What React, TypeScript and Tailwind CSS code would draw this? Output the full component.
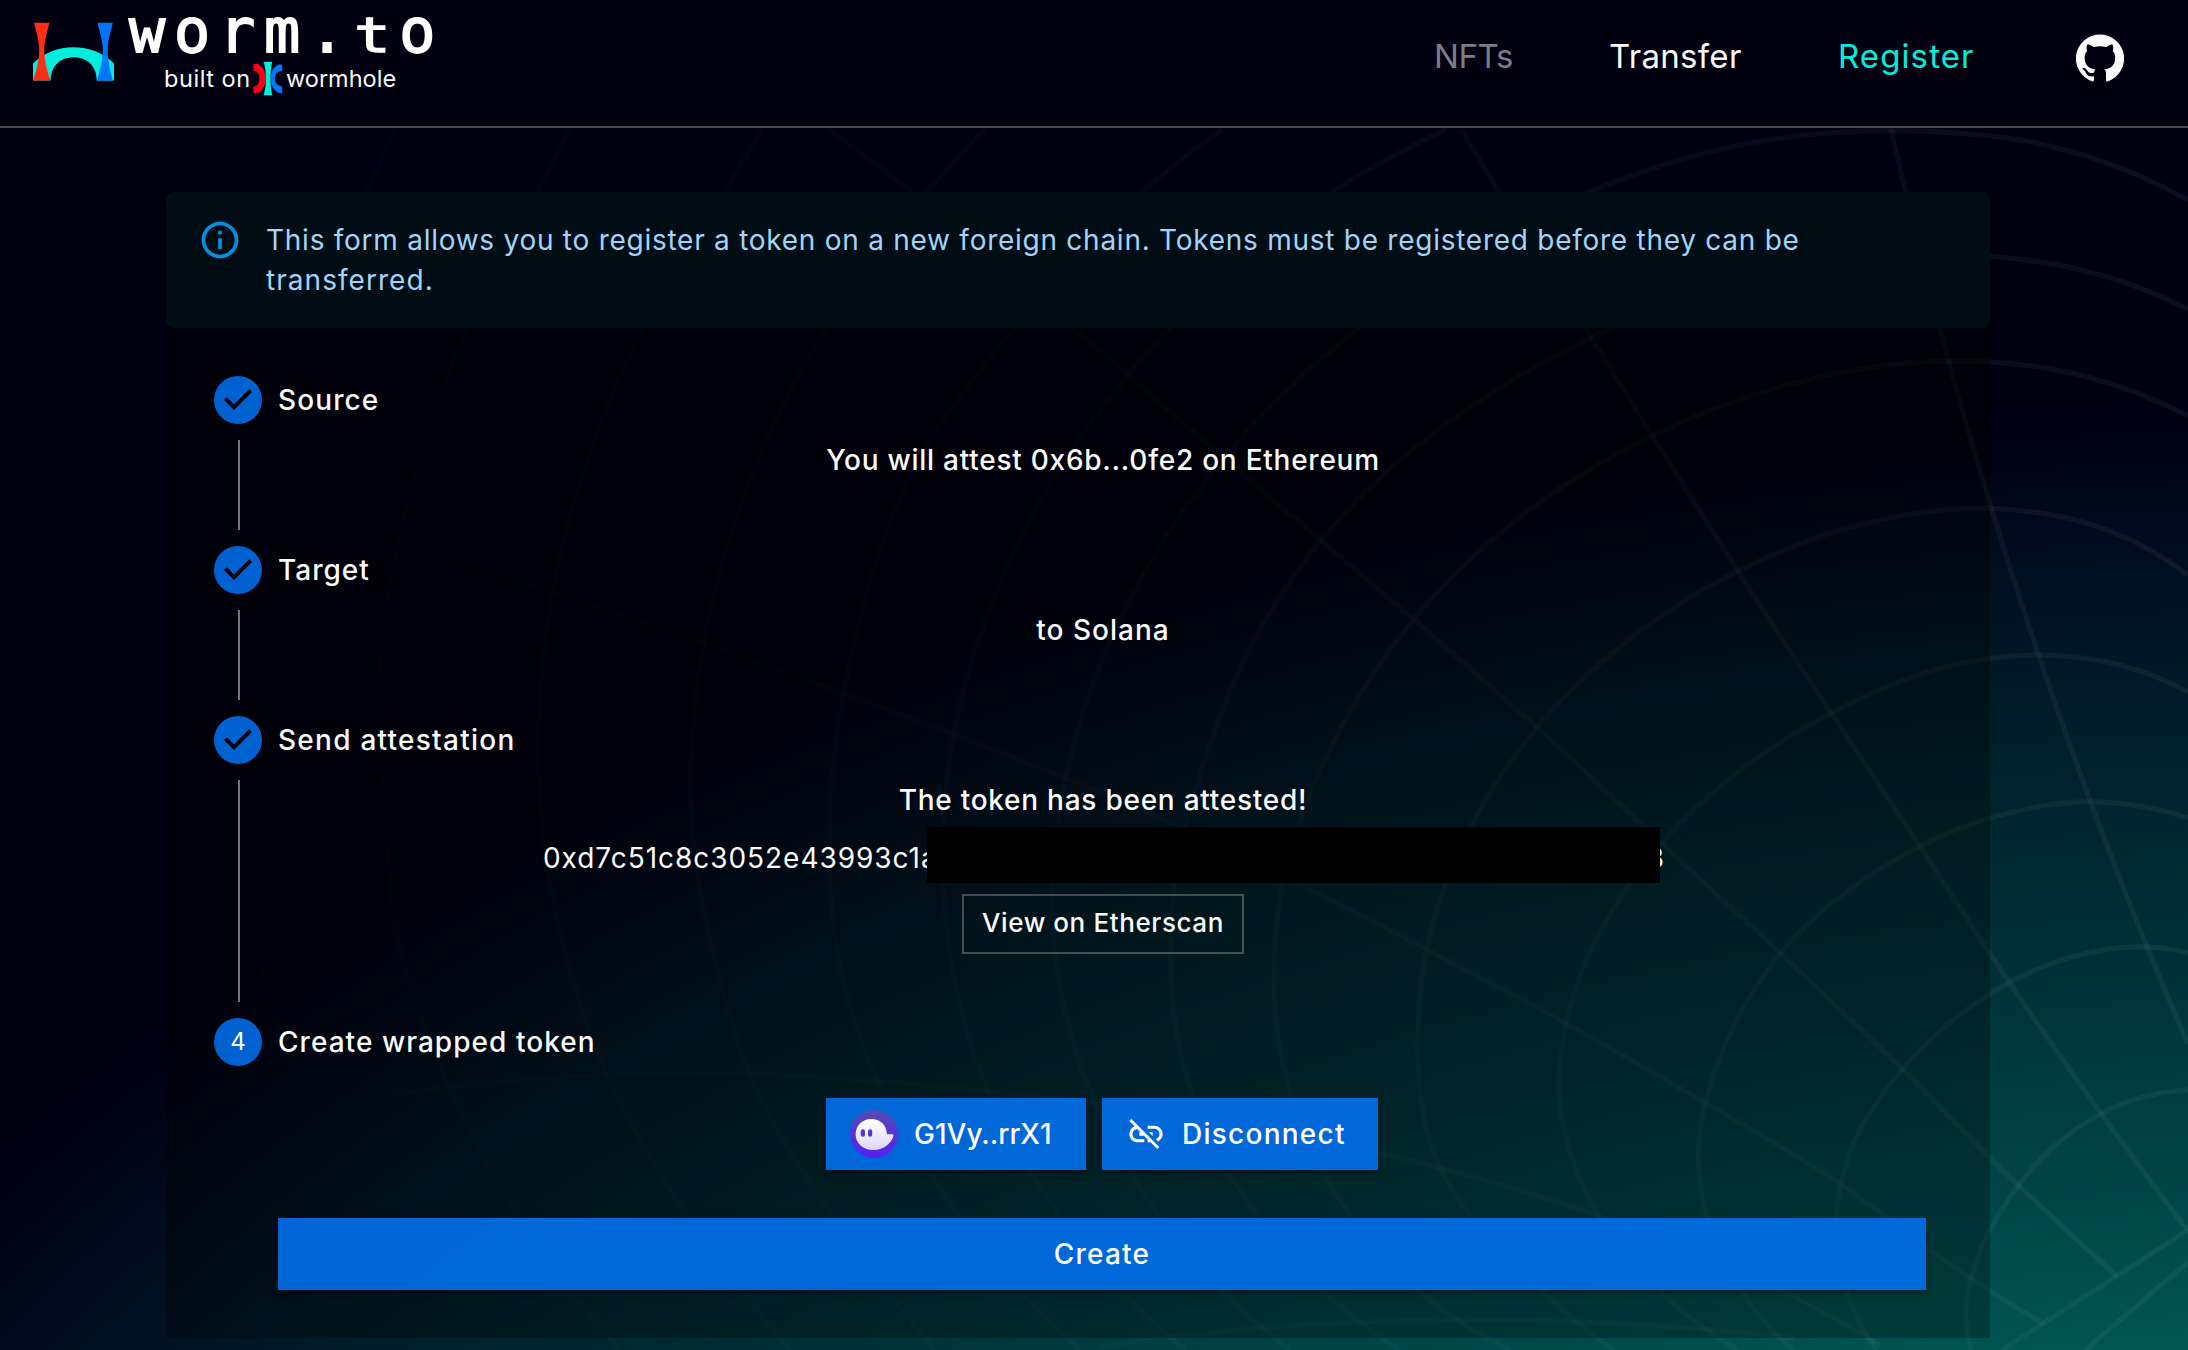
import React from "react";

type Point = [number, number];

// Rings of the tunnel grid, from the outermost to the innermost.
const RINGS: Point[][] = [
  [[395, 129], [372, 180], [303, 330], [252, 513], [229, 680], [233, 813], [249, 913], [294, 1073]],
  [[570, 129], [543, 180], [466, 330], [405, 513], [379, 680], [385, 813], [401, 953], [443, 1073], [540, 1250], [620, 1350]],
  [[762, 129], [725, 192], [642, 330], [573, 507], [541, 680], [541, 813], [570, 970], [606, 1073], [660, 1173], [790, 1350]],
  [[985, 129], [933, 185], [826, 328], [740, 507], [698, 680], [691, 813], [718, 973], [749, 1073], [833, 1217], [935, 1350]],
  [[1223, 129], [1142, 192], [1014, 328], [912, 473], [852, 653], [830, 813], [843, 980], [874, 1073], [960, 1217], [1080, 1350]],
  [[1447, 129], [1332, 192], [1169, 329], [1020, 540], [953, 740], [943, 870], [976, 1060], [1060, 1217], [1185, 1350]],
  [[2188, 200], [2050, 146], [1912, 131], [1750, 143], [1589, 192], [1357, 329], [1225, 457], [1135, 590], [1070, 760], [1053, 930], [1082, 1070], [1160, 1217], [1290, 1350]],
  [[2188, 309], [2090, 272], [1990, 256], [1880, 253], [1750, 273], [1610, 329], [1470, 407], [1357, 500], [1267, 617], [1208, 750], [1172, 910], [1182, 1060], [1258, 1217], [1400, 1350]],
  [[2188, 416], [2080, 375], [1950, 361], [1794, 383], [1648, 438], [1516, 520], [1405, 630], [1325, 760], [1280, 900], [1282, 1060], [1351, 1217], [1510, 1350]],
  [[2188, 575], [2110, 531], [2002, 509], [1863, 524], [1738, 571], [1610, 655], [1523, 745], [1455, 860], [1419, 1007], [1440, 1168], [1520, 1270], [1614, 1350]],
  [[2188, 692], [2120, 665], [2044, 655], [1945, 667], [1835, 711], [1710, 795], [1624, 892], [1572, 1000], [1559, 1090], [1579, 1177], [1654, 1285], [1738, 1350]],
  [[2188, 818], [2099, 802], [1990, 818], [1880, 869], [1780, 954], [1719, 1060], [1698, 1160], [1715, 1240], [1794, 1350]],
  [[2188, 953], [2148, 947], [2072, 957], [1985, 997], [1900, 1072], [1849, 1155], [1836, 1240], [1877, 1350]],
  [[2188, 1090], [2127, 1102], [2064, 1138], [2008, 1200], [1975, 1265], [1966, 1310], [1971, 1350]],
];

// Lines that run along the tunnel, towards its far end.
const SPOKES: Point[][] = [
  [[1891, 129], [1940, 329], [1990, 504], [2068, 740], [2141, 932], [2188, 1044]],
  [[1461, 129], [1499, 192], [1586, 329], [1652, 435], [1738, 571], [1849, 740], [1919, 845], [2009, 982], [2188, 1231]],
  [[828, 129], [912, 192], [1073, 328], [1225, 459], [1412, 618], [1551, 740], [1672, 853], [1780, 953], [1898, 1065], [2016, 1183], [2117, 1276]],
  [[203, 508], [400, 551], [561, 595], [701, 642], [842, 693], [1020, 760], [1177, 825], [1294, 882], [1426, 949], [1565, 1023], [1704, 1102], [1836, 1181], [1967, 1276], [2044, 1324]],
  [[379, 1097], [561, 1077], [780, 1075], [976, 1090], [1180, 1115], [1380, 1153], [1593, 1214], [1760, 1280], [1880, 1345]],
  [[1100, 1347], [1287, 1326], [1447, 1320], [1586, 1322], [1794, 1338]],
  [[2002, 1350], [2188, 1230]],
  [[2085, 1350], [2188, 1262]],
];

const dist = (a: Point, b: Point) => Math.hypot(a[0] - b[0], a[1] - b[1]);

// Unit tangent at point i, weighted by the lengths of the chords on both sides.
function tangent(p: Point[], i: number): Point {
  const last = p.length - 1;
  if (i === 0 || i === last) {
    const s = i === 0 ? p[0] : p[last - 1];
    const e = i === 0 ? p[1] : p[last];
    const l = dist(s, e);
    const c: Point = [(e[0] - s[0]) / l, (e[1] - s[1]) / l];
    if (last === 1) return c;
    const n = tangent(p, i === 0 ? 1 : last - 1);
    const k = 2 * (c[0] * n[0] + c[1] * n[1]);
    return [k * c[0] - n[0], k * c[1] - n[1]];
  }
  const [a, b, c] = [p[i - 1], p[i], p[i + 1]];
  const l1 = dist(a, b);
  const l2 = dist(b, c);
  const x = ((b[0] - a[0]) / l1) * l2 + ((c[0] - b[0]) / l2) * l1;
  const y = ((b[1] - a[1]) / l1) * l2 + ((c[1] - b[1]) / l2) * l1;
  const n = Math.hypot(x, y);
  return [x / n, y / n];
}

function curve(p: Point[]) {
  let d = `M${p[0][0]} ${p[0][1]}`;
  for (let i = 0; i < p.length - 1; i++) {
    const b = p[i];
    const c = p[i + 1];
    const l = dist(b, c) / 3;
    const u = tangent(p, i);
    const v = tangent(p, i + 1);
    d += `C${b[0] + u[0] * l} ${b[1] + u[1] * l} ${c[0] - v[0] * l} ${c[1] - v[1] * l} ${c[0]} ${c[1]}`;
  }
  return d;
}

function Backdrop() {
  return (
    <svg className="absolute inset-0" width="2188" height="1350" viewBox="0 0 2188 1350" fill="none" aria-hidden="true">
      <defs>
        <linearGradient id="fade" gradientUnits="userSpaceOnUse" x1="200" y1="0" x2="2188" y2="0">
          <stop offset="0" stopColor="#b9bccb" stopOpacity="0.008" />
          <stop offset="0.4" stopColor="#b9bccb" stopOpacity="0.025" />
          <stop offset="0.8" stopColor="#b9bccb" stopOpacity="0.048" />
          <stop offset="1" stopColor="#b9bccb" stopOpacity="0.07" />
        </linearGradient>
      </defs>
      <g stroke="url(#fade)" strokeWidth="5">
        {[...RINGS, ...SPOKES].map((line, i) => (
          <path key={i} d={curve(line)} />
        ))}
      </g>
    </svg>
  );
}

function BridgeMark() {
  return (
    <svg width="82" height="59" viewBox="33 22 82 59" className="mt-[22px] shrink-0">
      <path fill="#00efdd" d="M33 63.5Q50 47.3 73.5 47.3T114 63.5V80.6H96.7C96.7 66 87 57.3 73.7 57.3S50.7 66 50.7 80.6H33Z" />
      <path fill="#ff2d16" d="M34 22.7H49.4C47 33 44.3 40 44.3 50C44.3 61 47 69 50.4 80.6H33.2C36.5 69 39.2 61 39.2 50C39.2 40 36.4 33 34 22.7Z" />
      <path fill="#0076ff" d="M97.5 22.7H112.8C110.4 33 107.7 40 107.7 50C107.7 61 110 69 112.8 80.6H97C100 69 102.8 61 102.8 50C102.8 40 99.8 33 97.5 22.7Z" />
    </svg>
  );
}

function WormholeMark() {
  return (
    <svg width="30" height="36" viewBox="253 62 30 36" className="shrink-0">
      <path fill="#fb0017" d="M253.5 65H258Q265.8 69.5 265.8 79.3T258 94H253.5V87.6Q259.3 87 259.3 79.5T253.5 71.8Z" />
      <path fill="#0076ff" d="M282.2 65.5H278.5Q270.6 69.5 270.6 79.5T278.5 94H282.2V87.4Q275 86.5 275 79.5T282.2 71.8Z" />
      <path fill="#00efdd" d="M263.6 62.8H272.2C270 72 270 86 272.2 96.3H263.6C266.6 86 266.6 72 263.6 62.8Z" />
    </svg>
  );
}

function Header() {
  return (
    <header className="relative flex h-32 border-b-2 border-[#4d4b50] bg-[#000010] pl-[33px]">
      <BridgeMark />
      <div className="ml-[12px] w-[330px] whitespace-nowrap">
        <div className="flex h-[62px] items-start pt-px pl-[2px] font-['DejaVu_Sans_Mono'] text-[60px] leading-[60px] tracking-[8.9px] text-white [-webkit-text-stroke:1.8px_white]">
          worm.<span className="origin-[0_51px] scale-y-[0.8]">t</span>o
        </div>
        <div className="-mt-[2px] flex h-[38px] items-center pl-[37px] text-[23.500px] leading-[36px] text-[#fafafa]">
          <span className="w-[89px] pb-px tracking-[0.55px]">built on</span>
          <WormholeMark />
          <span className="ml-[3px] pb-px">wormhole</span>
        </div>
      </div>
      <nav className="ml-auto flex h-[112px] items-center pr-[64px] text-[33px] leading-[40px] text-[#fafafa]">
        <span className="mr-[97px] w-[78px] tracking-[-0.4px] text-[#7e7c86]">NFTs</span>
        <span className="mr-[97px] w-[132px] tracking-[0.3px]">Transfer</span>
        <span className="mr-[103px] w-[135px] tracking-[1.1px] text-[#00efdd]">Register</span>
        <svg width="48" height="48" viewBox="0 0 24 24" fill="#fafafa" className="mt-1">
          <path d="M12 .3a12 12 0 0 0-3.8 23.4c.6.1.8-.3.8-.6v-2c-3.3.7-4-1.6-4-1.6-.6-1.4-1.4-1.8-1.4-1.8-1-.7.1-.7.1-.7 1.2 0 1.9 1.2 1.9 1.2 1 1.8 2.8 1.3 3.5 1 0-.8.4-1.3.7-1.6-2.7-.3-5.5-1.3-5.5-6 0-1.2.5-2.3 1.3-3.1-.2-.4-.6-1.6 0-3.2 0 0 1-.3 3.4 1.2a11.5 11.5 0 0 1 6 0c2.3-1.5 3.3-1.2 3.3-1.2.6 1.6.2 2.8 0 3.2.9.8 1.3 1.9 1.3 3.2 0 4.6-2.8 5.6-5.5 5.9.5.4.9 1 .9 2.2v3.3c0 .3.1.7.8.6A12 12 0 0 0 12 .3" />
        </svg>
      </nav>
    </header>
  );
}

function InfoAlert() {
  return (
    <div className="flex h-[136px] rounded-lg bg-[#010d15] py-[28px] pl-8">
      <svg width="44" height="44" viewBox="0 0 24 24" fill="#0290e2" className="-mt-[2px] shrink-0">
        <path d="M11 7h2v2h-2zM11 11h2v6h-2zM12 2C6.48 2 2 6.48 2 12s4.48 10 10 10 10-4.48 10-10S17.52 2 12 2zm0 18c-4.41 0-8-3.59-8-8s3.59-8 8-8 8 3.59 8 8-3.59 8-8 8z" />
      </svg>
      <p className="ml-6 text-[28px] leading-[40px] tracking-[0.74px] whitespace-nowrap text-[#a2d4f8]">
        This form allows you to register a token on a new foreign chain. Tokens must be registered before they can be
        <br />
        <span className="tracking-[1.05px]">transferred.</span>
      </p>
    </div>
  );
}

function StepMark({ number }: { number?: number }) {
  if (number) {
    return (
      <span className="flex h-12 w-12 shrink-0 items-center justify-center rounded-full bg-[#0062d1] text-[24px] leading-none text-white">
        {number}
      </span>
    );
  }
  return (
    <svg width="48" height="48" viewBox="0 0 24 24" fill="#0062d1" className="shrink-0">
      <path d="M12 0a12 12 0 1 0 0 24 12 12 0 0 0 0-24zm-2 17l-5-5 1.4-1.4 3.6 3.6 7.6-7.6L19 8l-9 9z" />
    </svg>
  );
}

function Step({ label, spacing, number, className, children }: { label: string; spacing: string; number?: number; className: string; children: React.ReactNode }) {
  return (
    <li className={`flex ${className}`}>
      <div className="flex w-12 flex-col items-center">
        <StepMark number={number} />
        {!number && <span className="my-4 ml-[2px] w-[2px] flex-1 bg-[#757578]" />}
      </div>
      <div className="ml-4 flex-1">
        <h2 className={`text-[28px] leading-[48px] font-[550] text-[#fafafa] ${spacing}`}>{label}</h2>
        {children}
      </div>
    </li>
  );
}

const LINE = "mt-4 pl-[2px] text-center text-[28px] leading-[40px] font-[550] text-[#fafafa]";
const BUTTON =
  "flex h-[72px] items-center bg-[rgba(0,112,236,0.9)] text-[28px] font-[550] text-white shadow-[0_6px_2px_-4px_rgba(0,0,0,0.2),0_4px_4px_0_rgba(0,0,0,0.14),0_2px_10px_0_rgba(0,0,0,0.12)]";

function Ghost() {
  return (
    <svg width="48" height="48" viewBox="0 0 48 48" className="shrink-0">
      <defs>
        <linearGradient id="ring" x1="0" y1="0" x2="0" y2="1">
          <stop stopColor="#534bb1" />
          <stop offset="1" stopColor="#5520f6" />
        </linearGradient>
        <linearGradient id="ghost" x1="0" y1="0" x2="0" y2="1">
          <stop stopColor="#ffffff" />
          <stop offset="1" stopColor="#dfd6fb" />
        </linearGradient>
      </defs>
      <circle cx="24" cy="24" r="24" fill="url(#ring)" />
      <path fill="url(#ghost)" d="M5.6 24.5C5.6 16 12 9 21 9c9 0 15.5 6 15.7 14q0 1.2 1.2 1.2h4.5q1.2 0 1.1 1.2C42.500 32 34 40 23.500 40 13 40.200 5.600 33 5.600 24.500z" />
      <rect x="10.800" y="19.200" width="4.200" height="7.600" rx="2.100" fill="#5138cf" />
      <rect x="18" y="19.200" width="4.200" height="7.600" rx="2.100" fill="#5138cf" />
    </svg>
  );
}

export default function App() {
  return (
    <div className="relative h-[1350px] w-[2188px] overflow-hidden bg-[#000010] bg-[radial-gradient(2890px_1900px_at_2300px_2300px,#006a60_40%,#005652_50%,#00474a_58%,#003439_69%,#001d28_84%,#000e1e_91.5%,#000010_100%)] font-['Inter',sans-serif]">
      <Backdrop />
      <Header />
      <main className="relative mt-16 ml-[166px] h-[1146px] w-[1824px] bg-black/28">
        <InfoAlert />
        <ol className="p-12 pr-16">
          <Step label="Source" spacing="tracking-[1.1px]" className="h-[170px]">
            <p className={`${LINE} tracking-[0.75px]`}>You will attest 0x6b...0fe2 on Ethereum</p>
          </Step>
          <Step label="Target" spacing="tracking-[1px]" className="h-[170px]">
            <p className={`${LINE} tracking-[1px]`}>to Solana</p>
          </Step>
          <Step label="Send attestation" spacing="tracking-[1.25px]" className="h-[302px]">
            <p className={`${LINE} tracking-[0.75px]`}>The token has been attested!</p>
            <div className="relative mx-auto mt-[18px] flex h-10 w-[1124px] justify-between pl-[3px] text-[28px] leading-[40px] tracking-[0.96px] text-[#fafafa]">
              <span>0xd7c51c8c3052e43993c1a</span>
              <span className="tracking-normal">3</span>
              <span className="absolute -top-[11px] left-[387px] h-14 w-[733px] bg-black" />
            </div>
            <div className="mt-4 flex justify-center pl-[2px]">
              <button className="h-[60px] w-[282px] border-2 border-white/25 pb-[2px] text-[26px] leading-[40px] font-[550] tracking-[0.6px] whitespace-nowrap text-[#fafafa]">
                View on Etherscan
              </button>
            </div>
          </Step>
          <Step label="Create wrapped token" spacing="tracking-[1.04px]" number={4} className="">
            <div className="mt-8 flex justify-center gap-4">
              <button className={`${BUTTON} w-[260px] pl-6`}>
                <Ghost />
                <span className="ml-[16px]">G1Vy..rrX1</span>
              </button>
              <button className={`${BUTTON} w-[276px] pl-6`}>
                <svg width="40" height="40" viewBox="0 0 24 24" fill="currentColor" className="shrink-0">
                  <path d="M17 7h-4v1.900h4c1.710 0 3.100 1.390 3.100 3.100 0 1.430-.98 2.630-2.310 2.980l1.460 1.460C20.880 15.610 22 13.950 22 12c0-2.760-2.240-5-5-5zm-1 4h-2.190l2 2H16zM2 4.270l3.110 3.110C3.290 8.120 2 9.910 2 12c0 2.760 2.240 5 5 5h4v-1.900H7c-1.710 0-3.100-1.390-3.100-3.100 0-1.590 1.210-2.900 2.760-3.070L8.730 11H8v2h2.730L13 15.270V17h1.730l4.010 4L20 19.740 3.270 3 2 4.270z" />
                </svg>
                <span className="ml-[16px] tracking-[1.25px]">Disconnect</span>
              </button>
            </div>
            <button className={`${BUTTON} mt-12 w-full justify-center tracking-[1.2px]`}>Create</button>
          </Step>
        </ol>
      </main>
    </div>
  );
}
